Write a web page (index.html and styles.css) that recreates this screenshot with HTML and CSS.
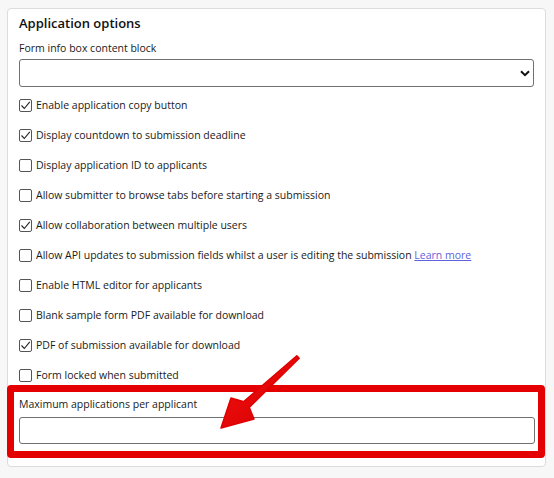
FILE: index.html
```html
<!DOCTYPE html>
<html lang="en">
<head>
<meta charset="utf-8">
<title>Application options</title>
<link rel="stylesheet" href="styles.css">
</head>
<body>
<div class="card">
  <h2 class="title">Application options</h2>
  <label class="label">Form info box content block</label>
  <div class="select">
    <svg class="chev" width="10" height="7" viewBox="0 0 10 7"><path d="M1 1.2 L5 5.2 L9 1.2" fill="none" stroke="#111" stroke-width="2"/></svg>
  </div>
  <div class="options">
    <div class="row"><span class="box"><svg width="11" height="11" viewBox="0 0 11 11"><path d="M1.5 5.5 L4.3 8.5 L9.8 1.8" fill="none" stroke="#222" stroke-width="1.1"/></svg></span><span>Enable application copy button</span></div>
    <div class="row"><span class="box"><svg width="11" height="11" viewBox="0 0 11 11"><path d="M1.5 5.5 L4.3 8.5 L9.8 1.8" fill="none" stroke="#222" stroke-width="1.1"/></svg></span><span>Display countdown to submission deadline</span></div>
    <div class="row"><span class="box"></span><span>Display application ID to applicants</span></div>
    <div class="row"><span class="box"></span><span>Allow submitter to browse tabs before starting a submission</span></div>
    <div class="row"><span class="box"><svg width="11" height="11" viewBox="0 0 11 11"><path d="M1.5 5.5 L4.3 8.5 L9.8 1.8" fill="none" stroke="#222" stroke-width="1.1"/></svg></span><span>Allow collaboration between multiple users</span></div>
    <div class="row"><span class="box"></span><span>Allow API updates to submission fields whilst a user is editing the submission <a class="link" href="#">Learn more</a></span></div>
    <div class="row"><span class="box"></span><span>Enable HTML editor for applicants</span></div>
    <div class="row"><span class="box"></span><span>Blank sample form PDF available for download</span></div>
    <div class="row"><span class="box"><svg width="11" height="11" viewBox="0 0 11 11"><path d="M1.5 5.5 L4.3 8.5 L9.8 1.8" fill="none" stroke="#222" stroke-width="1.1"/></svg></span><span>PDF of submission available for download</span></div>
    <div class="row"><span class="box"></span><span>Form locked when submitted</span></div>
  </div>
  <label class="label max-label">Maximum applications per applicant</label>
  <div class="input"></div>
</div>
<div class="highlight"></div>
<svg class="arrow" width="554" height="478" viewBox="0 0 554 478">
  <defs>
    <linearGradient id="ag" x1="0" y1="0" x2="1" y2="1">
      <stop offset="0" stop-color="#f01010"/>
      <stop offset="1" stop-color="#d80000"/>
    </linearGradient>
  </defs>
  <polygon points="299.2,358.3 249.2,407.4 254,419 221,428 231,398 243.8,401.6 296.8,355.7" fill="url(#ag)" stroke="#e00000" stroke-width="1.5" stroke-linejoin="round"/>
</svg>
</body>
</html>
```
FILE: styles.css
```css
html, body {
  margin: 0;
  padding: 0;
}
body {
  background: #f7f7f7;
  font-family: "Open Sans", "Noto Sans", sans-serif;
  color: #1a1a1a;
  width: 554px;
  height: 478px;
  overflow: hidden;
  position: relative;
}
.card {
  margin: 8px 0 0 7px;
  width: 539px;
  height: 459px;
  box-sizing: border-box;
  background: #fff;
  border: 1px solid #dcdcdc;
  border-radius: 4px;
  padding: 5px 12px 0 11px;
}
.title {
  margin: 0;
  font-size: 13px;
  line-height: 18px;
  font-weight: 600;
  color: #111;
}
.label {
  display: block;
  margin-top: 9px;
  font-size: 10.5px;
  line-height: 15px;
}
.select {
  margin-top: 3px;
  height: 28px;
  box-sizing: border-box;
  width: 515px;
  border: 1px solid #707070;
  border-radius: 3px;
  display: flex;
  align-items: center;
  justify-content: flex-end;
  padding-right: 3px;
}
.options {
  margin-top: 3px;
  display: flex;
  flex-direction: column;
}
.row {
  height: 30px;
  display: flex;
  align-items: center;
  gap: 4px;
  font-size: 10.5px;
  line-height: 15px;
}
.box {
  width: 13px;
  height: 13px;
  box-sizing: border-box;
  border: 1px solid #555;
  border-radius: 2px;
  background: #fff;
  display: flex;
  align-items: center;
  justify-content: center;
  flex: none;
}
.link {
  color: #5f62dc;
  text-decoration: underline;
}
.max-label {
  margin-top: 7px;
}
.input {
  margin-top: 5px;
  width: 516px;
  height: 27px;
  box-sizing: border-box;
  border: 1px solid #707070;
  border-radius: 3px;
}
.highlight {
  position: absolute;
  left: 7px;
  top: 385px;
  width: 538px;
  height: 73px;
  box-sizing: border-box;
  border: 7px solid #e40000;
  border-radius: 4px;
}
.arrow {
  position: absolute;
  left: 0;
  top: 0;
}
```
